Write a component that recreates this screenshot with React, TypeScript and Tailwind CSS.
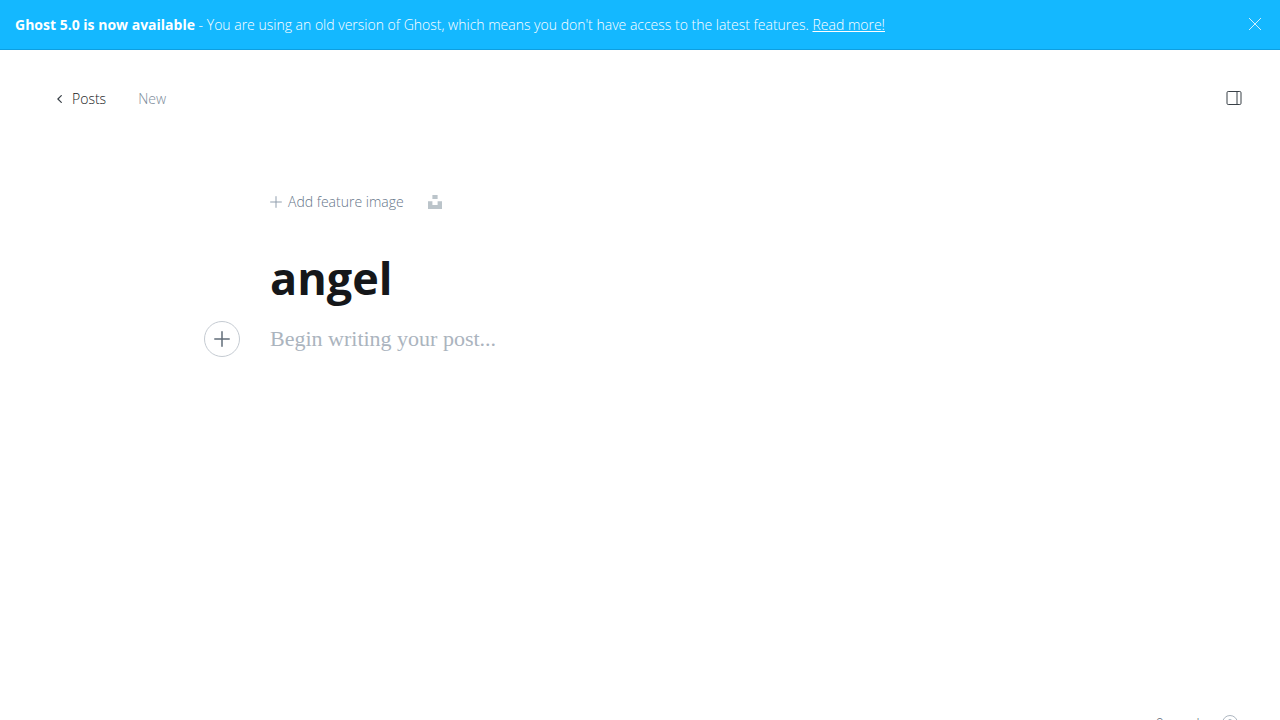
import { useState } from "react";

function CloseIcon() {
  return (
    <svg className="size-3" viewBox="0 0 12 12" fill="none" stroke="currentColor" aria-hidden="true">
      <path d="M0 0L12 12M12 0L0 12" strokeWidth="0.8" />
    </svg>
  );
}

function ChevronIcon() {
  return (
    <svg className="h-2 w-[5px] text-[#394047]" viewBox="0 0 5 8" fill="none" stroke="currentColor" aria-hidden="true">
      <path d="M4.3 0.6L0.9 4L4.3 7.4" strokeWidth="1.2" strokeLinecap="round" strokeLinejoin="round" />
    </svg>
  );
}

function SidebarIcon() {
  return (
    <svg className="size-4" viewBox="0 0 16 16" fill="none" stroke="currentColor" aria-hidden="true">
      <rect x="1" y="1.5" width="14" height="13" rx="1.2" />
      <path d="M11 1.5V14.5" />
    </svg>
  );
}

function PlusIcon({ className, weight }: { className: string; weight: number }) {
  return (
    <svg className={className} viewBox="0 0 16 16" fill="none" stroke="currentColor" aria-hidden="true">
      <path d="M8 0.8V15.2M0.8 8H15.2" strokeWidth={weight} strokeLinecap="round" />
    </svg>
  );
}

function UnsplashIcon() {
  return (
    <svg className="size-3.5" viewBox="0 0 14 14" fill="currentColor" aria-hidden="true">
      <path d="M4.4 0H9.6V4H4.4ZM0 6.2H4.4V10.1H9.6V6.2H14V14H0Z" />
    </svg>
  );
}

function HelpIcon() {
  return (
    <svg className="size-4" viewBox="0 0 16 16" fill="none" stroke="currentColor" aria-hidden="true">
      <circle cx="8" cy="8" r="7.5" />
      <path d="M6 6.2A2 2 0 1 1 8 8.4V9.6" strokeLinecap="round" />
      <circle cx="8" cy="11.8" r="0.3" />
    </svg>
  );
}

export default function App() {
  const [title, setTitle] = useState("angel");
  const [body, setBody] = useState("");

  return (
    <div className="flex h-screen flex-col overflow-hidden bg-white font-['Open_Sans','Noto_Sans',sans-serif] text-sm font-light text-[#15171a]">
      <aside className="flex h-[50px] shrink-0 items-center justify-between border-b border-[#0e9fe0] bg-[#14b8ff] pr-[19px] pl-[15px] text-white">
        <p className="leading-5">
          <strong className="font-bold">Ghost 5.0 is now available</strong> - You are using an old version of Ghost,
          which means you don't have access to the latest features.{" "}
          <a href="#upgrade" className="underline">
            Read more!
          </a>
        </p>
        <button type="button" aria-label="Close" className="pb-0.5">
          <CloseIcon />
        </button>
      </aside>

      <div className="flex min-h-[calc(100vh-31px)] shrink-0 flex-col">
        <header className="flex h-24 shrink-0 items-center justify-between pr-[38px] pl-[57px]">
          <nav className="flex items-center gap-8 pt-0.5" aria-label="Breadcrumb">
            <a href="#posts" className="flex items-center gap-2.5 leading-5">
              <ChevronIcon />
              Posts
            </a>
            <span className="leading-5 text-[#7c8b9a]">New</span>
          </nav>
          <button type="button" aria-label="Settings" className="text-[#394047]">
            <SidebarIcon />
          </button>
        </header>

        <main className="mx-auto w-full max-w-[740px] grow pt-11">
          <div className="flex items-center gap-6 text-[#667689]">
            <button type="button" className="flex items-center gap-1.5 leading-6">
              <PlusIcon className="size-3 text-[#8e9cac]" weight={1.3} />
              Add feature image
            </button>
            <button type="button" aria-label="Choose an Unsplash image" className="text-[#bbc4ca]">
              <UnsplashIcon />
            </button>
          </div>
          <input
            type="text"
            aria-label="Post title"
            value={title}
            onChange={(event) => setTitle(event.target.value)}
            className="mt-8 block h-16 w-full text-[45px] font-bold text-[#15171a] outline-none"
          />
          <div className="relative mt-[11px]">
            <button
              type="button"
              aria-label="Add a card"
              className="absolute top-0 right-full mr-[30px] flex size-9 items-center justify-center rounded-full border border-[#c5cbd2] text-[#626d79]"
            >
              <PlusIcon className="size-4" weight={1.5} />
            </button>
            <textarea
              aria-label="Post content"
              placeholder="Begin writing your post..."
              value={body}
              onChange={(event) => setBody(event.target.value)}
              className="block h-48 w-full resize-none font-['Liberation_Serif',serif] text-[22px] leading-9 font-normal outline-none placeholder:text-[#abb4be]"
            />
          </div>
        </main>

        <footer className="flex h-8 shrink-0 items-center justify-end gap-4 pr-[42px] text-[#626d79]">
          <span className="pt-0.5 leading-5">0 words</span>
          <a href="#help" aria-label="Help" className="text-[#aeb7c1]">
            <HelpIcon />
          </a>
        </footer>
      </div>
    </div>
  );
}
